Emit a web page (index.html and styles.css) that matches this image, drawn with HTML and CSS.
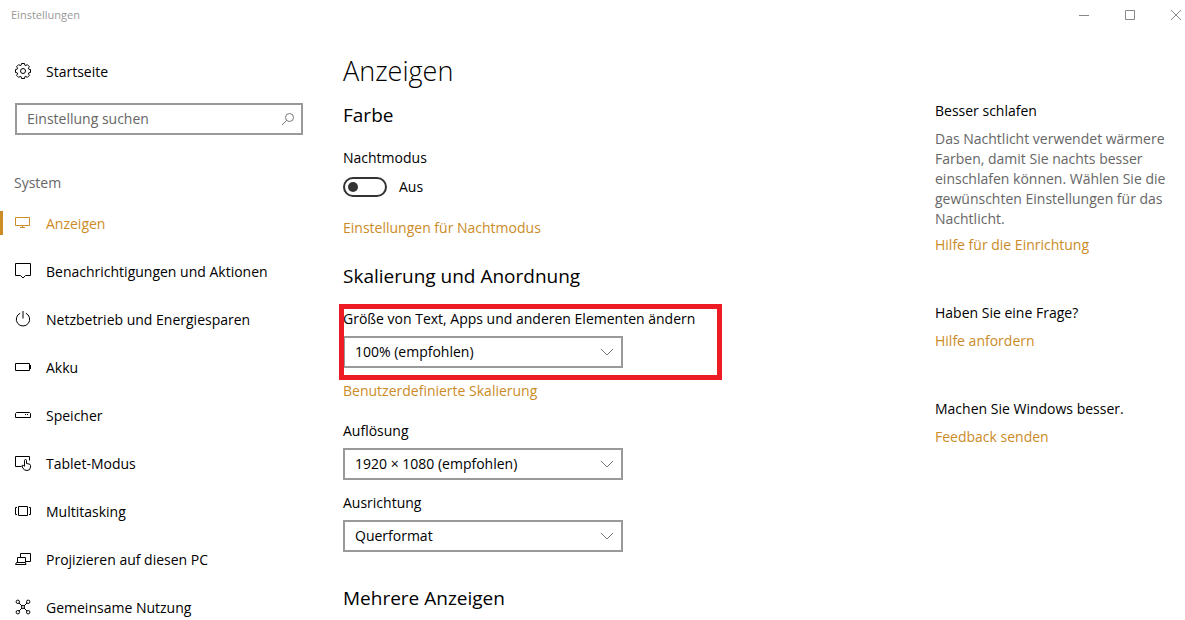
FILE: index.html
```
<!DOCTYPE html>
<html lang="de">
<head>
    <meta charset="utf-8">
    <title>Einstellungen</title>
    <link rel="stylesheet" href="styles.css">
</head>
<body>
    <header class="titlebar">
        <span class="window-title">Einstellungen</span>
        <div class="window-buttons">
            <button type="button" aria-label="Minimieren">
                <svg width="12" height="12" viewBox="0 0 12 12"><path d="M1 6.5h10"/></svg>
            </button>
            <button type="button" aria-label="Maximieren">
                <svg width="12" height="12" viewBox="0 0 12 12"><path d="M1.500 1.500h9v9h-9z"/></svg>
            </button>
            <button type="button" aria-label="Schließen">
                <svg width="12" height="12" viewBox="0 0 12 12"><path d="M1 1l10 10M11 1L1 11"/></svg>
            </button>
        </div>
    </header>

    <div class="layout">
        <nav class="sidebar">
            <a href="#" class="home">
                <svg class="icon" viewBox="0 0 16 16">
                    <circle cx="8" cy="8" r="2.500"/>
                    <path d="M6.500 .5h3l.3 1.700 1 .4 1.500-1 2.100 2.100-1 1.500.4 1 1.700.3v3l-1.700.3-.4 1 1 1.500-2.100 2.100-1.500-1-1 .4-.3 1.700h-3l-.3-1.700-1-.4-1.500 1-2.100-2.100 1-1.500-.4-1L.5 9.500v-3l1.700-.3.4-1-1-1.500 2.100-2.100 1.500 1 1-.4z"/>
                </svg>
                Startseite
            </a>
            <form class="search">
                <input type="text" placeholder="Einstellung suchen" aria-label="Einstellung suchen">
                <button type="button" aria-label="Suchen">
                    <svg width="14" height="14" viewBox="0 0 14 14"><circle cx="8.500" cy="5.500" r="4"/><path d="M5.700 8.300L1 13"/></svg>
                </button>
            </form>
            <h2 class="category">System</h2>
            <ul class="nav-list">
                <li>
                    <a href="#" class="active" aria-current="page">
                        <svg class="icon" viewBox="0 0 16 16"><path d="M.5 2.500h14v8H.5zM7.500 10.500v2M5 12.500h5"/></svg>
                        Anzeigen
                    </a>
                </li>
                <li>
                    <a href="#">
                        <svg class="icon" viewBox="0 0 16 16"><path d="M.5.5h15v12h-5L8 15l-2.500-2.500h-5z"/></svg>
                        Benachrichtigungen und Aktionen
                    </a>
                </li>
                <li>
                    <a href="#">
                        <svg class="icon" viewBox="0 0 16 16"><path d="M5.200 2.200a6.700 6.700 0 1 0 5.600 0M8 0v7.500"/></svg>
                        Netzbetrieb und Energiesparen
                    </a>
                </li>
                <li>
                    <a href="#">
                        <svg class="icon" viewBox="0 0 16 16"><path d="M.5 4.500h14v7H.5zM15.500 6v4"/></svg>
                        Akku
                    </a>
                </li>
                <li>
                    <a href="#">
                        <svg class="icon" viewBox="0 0 16 16"><path d="M1.500 5.500h13l1 1v4H.5v-4zM10.500 7v1M12.500 7v1"/></svg>
                        Speicher
                    </a>
                </li>
                <li>
                    <a href="#">
                        <svg class="icon" viewBox="0 0 16 16"><path d="M6.500 11.500h-6v-10h14v4M9.500 11V5.500q0-1 1-1t1 1v3l2.500.5q1.500.3 1.500 1.500v1.500q0 3.500-3.500 3.500-2.500 0-4-2L7 11q0-1.500 1.500-.5l1 1"/></svg>
                        Tablet-Modus
                    </a>
                </li>
                <li>
                    <a href="#">
                        <svg class="icon" viewBox="0 0 16 16"><path d="M3.500 3.500h9v9h-9zM2 4.500H.5v7H2M14 4.500h1.500v7H14"/></svg>
                        Multitasking
                    </a>
                </li>
                <li>
                    <a href="#">
                        <svg class="icon" viewBox="0 0 16 16"><path d="M5.500 6V2.500h10v8h-5M2.500 11V6.500h8V11M1.500 11.500h9l.5 2H.5z"/></svg>
                        Projizieren auf diesen PC
                    </a>
                </li>
                <li>
                    <a href="#">
                        <svg class="icon" viewBox="0 0 16 16">
                            <path d="M4 4l3 3M12 4L9 7M4 12l3-3M12 12L9 9"/>
                            <circle cx="2.800" cy="2.800" r="1.700"/>
                            <circle cx="13.200" cy="2.800" r="1.700"/>
                            <circle cx="2.800" cy="13.200" r="1.700"/>
                            <circle cx="13.200" cy="13.200" r="1.700"/>
                            <circle cx="8" cy="8" r="1.500"/>
                        </svg>
                        Gemeinsame Nutzung
                    </a>
                </li>
            </ul>
        </nav>

        <main class="content">
            <h1>Anzeigen</h1>

            <h2>Farbe</h2>
            <label class="field-label" for="night">Nachtmodus</label>
            <div class="toggle">
                <input type="checkbox" id="night" role="switch">
                <span>Aus</span>
            </div>
            <a href="#" class="night-link">Einstellungen für Nachtmodus</a>

            <h2 class="section">Skalierung und Anordnung</h2>
            <div class="field marked">
                <label class="field-label" for="scale">Größe von Text, Apps und anderen Elementen ändern</label>
                <div class="select">
                    <select id="scale">
                        <option>100% (empfohlen)</option>
                        <option>125%</option>
                        <option>150%</option>
                    </select>
                    <svg width="14" height="8" viewBox="0 0 14 8"><path d="M1 1l6 6 6-6"/></svg>
                </div>
            </div>
            <a href="#" class="scale-link">Benutzerdefinierte Skalierung</a>
            <div class="field resolution">
                <label class="field-label" for="resolution">Auflösung</label>
                <div class="select">
                    <select id="resolution">
                        <option>1920 × 1080 (empfohlen)</option>
                        <option>1280 × 720</option>
                    </select>
                    <svg width="14" height="8" viewBox="0 0 14 8"><path d="M1 1l6 6 6-6"/></svg>
                </div>
            </div>
            <div class="field orientation">
                <label class="field-label" for="orientation">Ausrichtung</label>
                <div class="select">
                    <select id="orientation">
                        <option>Querformat</option>
                        <option>Hochformat</option>
                    </select>
                    <svg width="14" height="8" viewBox="0 0 14 8"><path d="M1 1l6 6 6-6"/></svg>
                </div>
            </div>

            <h2 class="section-last">Mehrere Anzeigen</h2>
        </main>

        <aside class="help">
            <section>
                <h3>Besser schlafen</h3>
                <p>Das Nachtlicht verwendet wärmere Farben, damit Sie nachts besser einschlafen können. Wählen Sie die gewünschten Einstellungen für das Nachtlicht.</p>
                <a href="#">Hilfe für die Einrichtung</a>
            </section>
            <section>
                <h3>Haben Sie eine Frage?</h3>
                <a href="#">Hilfe anfordern</a>
            </section>
            <section>
                <h3>Machen Sie Windows besser.</h3>
                <a href="#">Feedback senden</a>
            </section>
        </aside>
    </div>
</body>
</html>
```
FILE: styles.css
```
* {
    box-sizing: border-box;
}

body {
    margin: 0;
    height: 100vh;
    overflow: hidden;
    background-color: #fff;
    color: #000;
    font-family: "Segoe UI", "Open Sans", "Noto Sans", sans-serif;
    font-size: 14px;
    line-height: 20px;
}

h1, h2, h3, p, ul {
    margin: 0;
    padding: 0;
    font-weight: normal;
}

a {
    color: #cb8b27;
    text-decoration: none;
}

button {
    border: none;
    padding: 0;
    background: none;
}

input, select {
    font: inherit;
}

svg {
    fill: none;
    stroke: currentColor;
}

/* title bar */

.titlebar {
    display: flex;
    justify-content: space-between;
    height: 30px;
    color: #999;
}

.window-title {
    padding-left: 11px;
    font-size: 11px;
    line-height: 30px;
}

.window-buttons {
    display: flex;
    margin-right: -14px;
}

.window-buttons button {
    display: flex;
    align-items: center;
    justify-content: center;
    width: 46px;
    color: #888;
}

.layout {
    display: grid;
    grid-template-columns: 303px 1fr 250px;
}

/* sidebar */

.icon {
    width: 16px;
    height: 16px;
    margin-bottom: 2px;
    flex: none;
}

.home {
    display: flex;
    align-items: center;
    gap: 15px;
    margin: 32px 0 0 15px;
    color: #000;
}

.search {
    display: flex;
    align-items: center;
    height: 32px;
    margin: 21px 0 0 15px;
    border: 2px solid #999;
}

.search input {
    flex: 1;
    min-width: 0;
    border: none;
    outline: none;
    padding: 0 10px;
}

.search input::placeholder {
    color: #666;
    opacity: 1;
}

.search button {
    display: flex;
    margin-right: 6px;
    color: #777;
}

.category {
    margin: 38px 0 0 14px;
    font-size: 14px;
    line-height: 20px;
    color: #666;
}

.nav-list {
    margin-top: 7px;
    list-style: none;
}

.nav-list a {
    display: flex;
    align-items: center;
    gap: 15px;
    height: 48px;
    padding-left: 15px;
    color: #000;
}

.nav-list .active {
    padding-left: 0;
    color: #cb8b27;
}

.nav-list .active::before {
    content: "";
    width: 3px;
    height: 24px;
    margin-right: -3px;
    margin-bottom: 2px;
    background-color: #cb8b27;
}

/* content */

.content {
    padding: 23px 0 0 40px;
}

.content a, .field-label {
    display: block;
    width: fit-content;
}

h1 {
    font-size: 27px;
    font-weight: 300;
    line-height: 36px;
}

.content h2 {
    margin-top: 12px;
    font-size: 19px;
    line-height: 28px;
}

h2 + .field-label, h2 + .field {
    margin-top: 19px;
}

.toggle {
    display: flex;
    align-items: center;
    gap: 12px;
    margin-top: 9px;
}

.toggle input {
    appearance: none;
    width: 44px;
    height: 20px;
    margin: 0;
    padding: 3px;
    border: 2px solid #333;
    border-radius: 10px;
}

.toggle input::before {
    content: "";
    display: block;
    width: 10px;
    height: 10px;
    border-radius: 50%;
    background-color: #333;
}

.toggle input:checked::before {
    margin-left: auto;
}

.content .night-link {
    margin-top: 21px;
}

.content .section {
    margin-top: 24px;
}

.field-label {
    white-space: nowrap;
}

.marked {
    position: relative;
}

/* red frame around the scaling setting */
.marked::after {
    content: "";
    position: absolute;
    top: -5px;
    left: -4px;
    width: 373px;
    bottom: -12px;
    border: 5px solid #ed1c24;
    pointer-events: none;
}

.select {
    position: relative;
    width: 280px;
    margin-top: 7px;
}

.select select {
    appearance: none;
    display: block;
    width: 100%;
    height: 32px;
    padding: 0 36px 0 10px;
    border: 2px solid #999;
    border-radius: 0;
    background-color: #fff;
    color: #000;
}

.select svg {
    position: absolute;
    top: 12px;
    right: 9px;
    color: #777;
    pointer-events: none;
}

.content .scale-link {
    margin-top: 13px;
}

.resolution {
    margin-top: 20px;
}

.orientation {
    margin-top: 13px;
}

.content .section-last {
    margin-top: 32px;
}

/* help column */

.help {
    display: flex;
    flex-direction: column;
    gap: 48px;
    padding: 71px 10px 0 0;
}

.help h3 {
    font-size: 14px;
    line-height: 20px;
}

.help p {
    margin-top: 8px;
    color: #666;
}

.help a {
    display: block;
    margin-top: 8px;
}

.help p + a {
    margin-top: 6px;
}
```
